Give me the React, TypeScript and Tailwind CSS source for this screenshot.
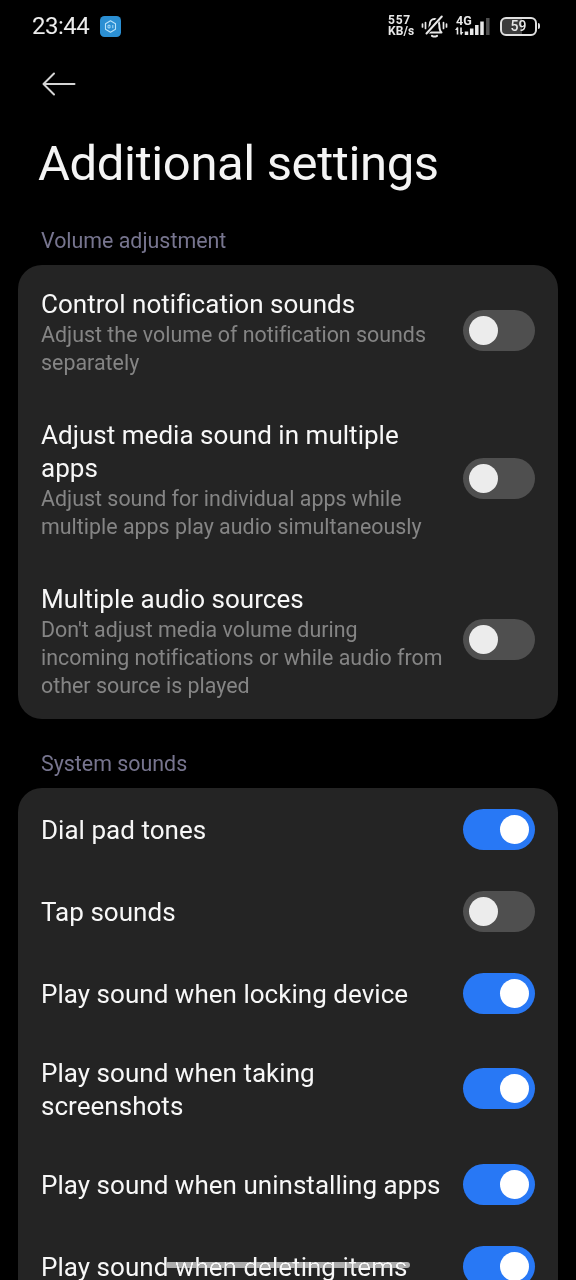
import { useState } from "react"

type Setting = {
  title: string
  description?: string
  enabled: boolean
  rowClass: string
}

const volumeSettings: Setting[] = [
  {
    title: "Control notification sounds",
    description: "Adjust the volume of notification sounds separately",
    enabled: false,
    rowClass: "h-[131px]",
  },
  {
    title: "Adjust media sound in multiple apps",
    description: "Adjust sound for individual apps while multiple apps play audio simultaneously",
    enabled: false,
    rowClass: "h-[164px]",
  },
  {
    title: "Multiple audio sources",
    description: "Don't adjust media volume during incoming notifications or while audio from other source is played",
    enabled: false,
    rowClass: "h-[159px]",
  },
]

const systemSettings: Setting[] = [
  { title: "Dial pad tones", enabled: true, rowClass: "h-[82px]" },
  { title: "Tap sounds", enabled: false, rowClass: "h-[82px]" },
  { title: "Play sound when locking device", enabled: true, rowClass: "h-[82px]" },
  { title: "Play sound when taking screenshots", enabled: true, rowClass: "h-[109px]" },
  { title: "Play sound when uninstalling apps", enabled: true, rowClass: "h-[82px]" },
  { title: "Play sound when deleting items", enabled: true, rowClass: "h-[82px]" },
]

function StatusBar() {
  return (
    <div className="flex h-[52px] shrink-0 items-center justify-between pl-8 pr-9">
      <div className="flex items-center gap-[11px]">
        <span className="w-[57px] text-[24px] leading-none tracking-[-0.5px] text-[#ececec]">23:44</span>
        <svg width="21" height="21" viewBox="0 0 21 21" fill="none">
          <rect width="21" height="21" rx="4.5" fill="#2b8fd3" />
          <path d="M10.5 4.8l5 2.9v5.6l-5 2.9-5-2.9V7.700z" stroke="#b9e2fa" strokeWidth="1.1" strokeLinejoin="round" />
          <path d="M8 9.300h2v2.600H8zM12.800 9v3.200" stroke="#b9e2fa" strokeWidth="0.9" />
        </svg>
      </div>
      <div className="flex items-center text-[#e8e8e8]">
        <div className="w-[33px] text-[12px] font-bold leading-[11px]">
          <p className="tracking-[0.8px]">557</p>
          <p className="tracking-[0.1px]">KB/s</p>
        </div>
        <svg width="27" height="24" viewBox="0 0 27 24" fill="none" stroke="currentColor" strokeLinecap="round">
          <path d="M7 18.500h13.500c-1.700-1.700-2.200-3.300-2.200-7.500 0-3.600-2-6-4.800-6s-4.800 2.400-4.800 6c0 3.200-.3 5.300-1.700 7.500z" strokeWidth="2" strokeLinejoin="round" />
          <path d="M19.200 3.200L6.500 17.800" stroke="#000" strokeWidth="4.200" />
          <path d="M20.800 2.500L5.500 19.500" strokeWidth="2" />
          <path d="M11 21.800q2.500 1.500 5 0" strokeWidth="2" />
          <path d="M4.500 8.500v6M1.500 10v3M22.500 8.500v6M25.500 10v3" strokeWidth="1.700" />
        </svg>
        <svg className="ml-[7px]" width="37" height="24" viewBox="0 0 37 24">
          <text x="1" y="10.500" fontSize="12.500" fontWeight="700" fill="currentColor">4G</text>
          <path d="M2.500 20.500v-7M6 13.500v7" stroke="currentColor" strokeWidth="1.600" />
          <path d="M0 16l2.500-3.300v3.300zM8.500 18L6 21.300V18z" fill="currentColor" />
          <path d="M11.500 17.500v3.500M16.700 14.500V21M21.800 11V21M27 7.500V21" stroke="currentColor" strokeWidth="3.500" />
          <path d="M32.800 4V21" stroke="#505050" strokeWidth="3.500" />
        </svg>
        <div className="ml-2 flex items-center gap-px">
          <div className="flex h-[19px] w-[37px] items-center justify-center rounded-[6px] border-2 border-[#e0e0e0] bg-linear-to-r from-[#3c3c3c] from-60% to-black to-60%">
            <span className="text-[14px] font-medium leading-none">59</span>
          </div>
          <div className="h-[6px] w-[2px] rounded-r bg-[#e0e0e0]" />
        </div>
      </div>
    </div>
  )
}

function Toggle(props: { checked: boolean; label: string; onChange: () => void }) {
  return (
    <button
      role="switch"
      aria-checked={props.checked}
      aria-label={props.label}
      onClick={props.onChange}
      className={`flex h-[41px] w-[72px] shrink-0 cursor-pointer items-center rounded-full px-1.5 ${
        props.checked ? "justify-end bg-[#2878f5]" : "justify-start bg-[#4f4f4f]"
      }`}
    >
      <span className={`size-[29px] rounded-full ${props.checked ? "bg-white" : "bg-[#ececec]"}`} />
    </button>
  )
}

function SettingRow(props: Setting) {
  const [checked, setChecked] = useState(props.enabled)
  return (
    <div className={`flex shrink-0 items-center justify-between px-[23px] ${props.rowClass}`}>
      <div className={`w-[404px] ${props.description ? "pt-[3px]" : "pt-0.5"}`}>
        <h3 className="text-[26px] leading-[33px] tracking-[0.03px] text-[#f7f7f7]">{props.title}</h3>
        {props.description && (
          <p className="text-[21.4px] leading-[28px] tracking-[0.01px] text-[#858585]">{props.description}</p>
        )}
      </div>
      <Toggle checked={checked} label={props.title} onChange={() => setChecked(!checked)} />
    </div>
  )
}

function Section(props: { name: string; items: Setting[] }) {
  return (
    <section className="flex flex-col">
      <h2 className="flex h-[69px] items-center pl-[41px] pt-[22px] text-[21.4px] text-[#77758f]">{props.name}</h2>
      <div className="mx-[18px] flex flex-col overflow-hidden rounded-[24px] bg-[#242424]">
        {props.items.map((item) => (
          <SettingRow key={item.title} {...item} />
        ))}
      </div>
    </section>
  )
}

function App() {
  return (
    <div className="relative flex h-[1280px] w-[576px] flex-col overflow-hidden bg-black font-['Roboto',sans-serif]">
      <StatusBar />
      <header className="flex h-[144px] shrink-0 flex-col pl-[38px]">
        <button aria-label="Back" className="ml-1 mt-5 w-[34px] cursor-pointer text-[#d5d5d5]">
          <svg width="34" height="24" viewBox="0 0 34 24" fill="none" stroke="currentColor" strokeWidth="2" strokeLinecap="round" strokeLinejoin="round">
            <path d="M12 1.500L1.500 12 12 22.500M1.500 12H32.500" />
          </svg>
        </button>
        <h1 className="mt-[38px] text-[49px] leading-[60px] tracking-[-0.38px] text-[#f4f4f4]">Additional settings</h1>
      </header>
      <Section name="Volume adjustment" items={volumeSettings} />
      <Section name="System sounds" items={systemSettings} />
      {/* gesture bar */}
      <div className="pointer-events-none absolute bottom-3 left-[165px] h-[6px] w-[245px] rounded-full bg-[#adadad] mix-blend-lighten" />
    </div>
  )
}

export default App
